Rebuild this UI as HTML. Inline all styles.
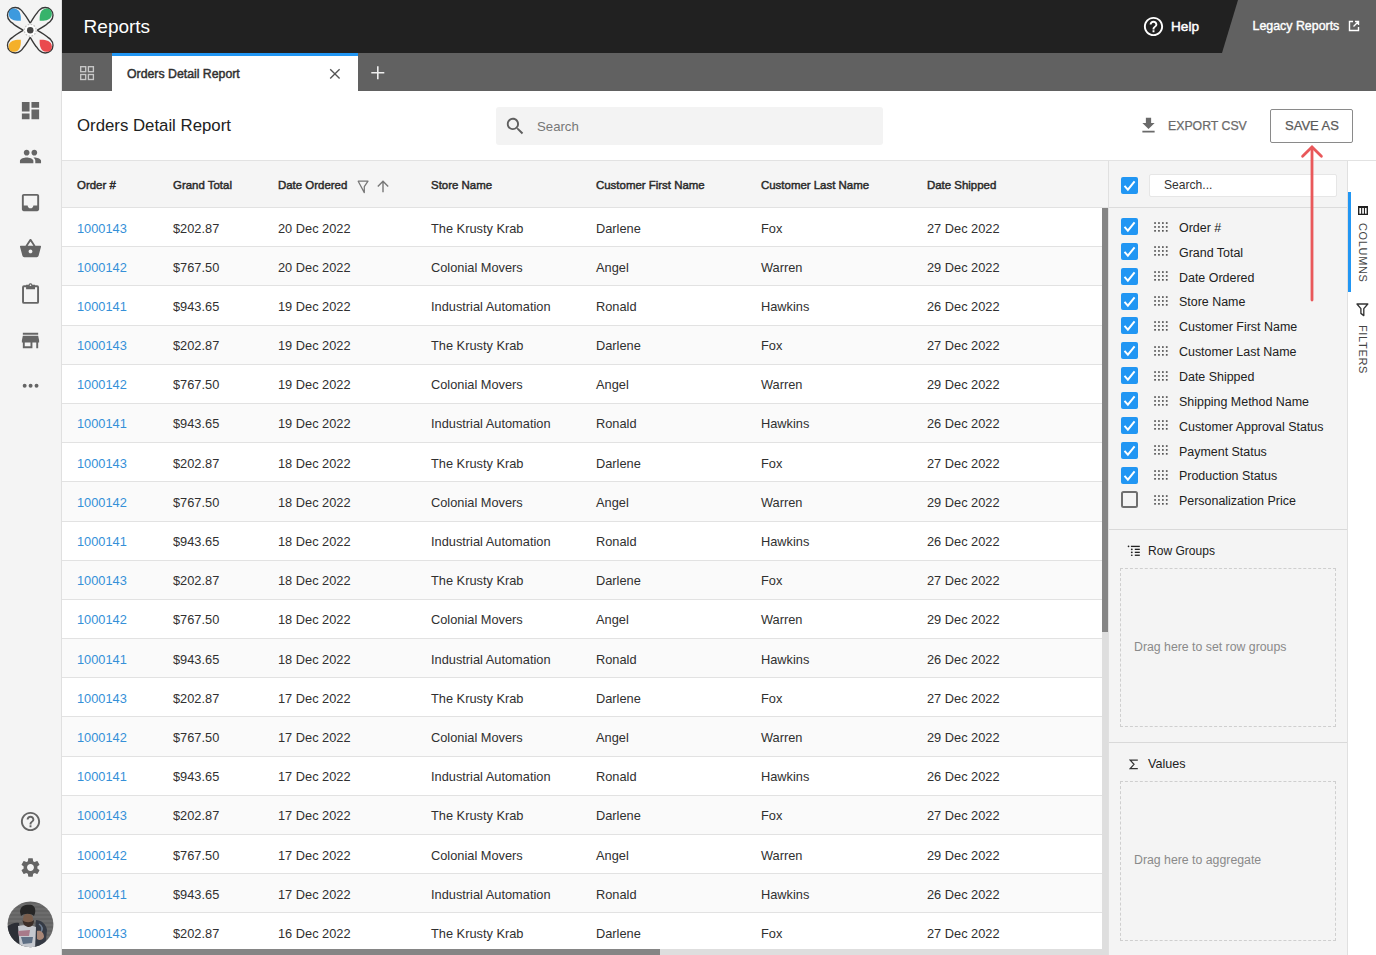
<!DOCTYPE html>
<html><head><meta charset="utf-8"><style>
*{box-sizing:border-box;margin:0;padding:0}
html,body{width:1376px;height:955px;overflow:hidden;background:#fff;font-family:"Liberation Sans",sans-serif;color:#212121}
.abs{position:absolute}
#side{position:absolute;left:0;top:0;width:62px;height:955px;background:#f4f4f4;border-right:1px solid #e0e0e0}
#side svg{position:absolute}
#hdr{position:absolute;left:62px;top:0;width:1314px;height:53px;background:#212121}
#hdr .title{position:absolute;left:21.6px;top:15px;font-size:19px;color:#fff;line-height:24px}
#legacy{position:absolute;left:1222px;top:0;width:154px;height:53px;background:#616161;clip-path:polygon(16px 0,154px 0,154px 53px,0 53px)}
#tabs{position:absolute;left:62px;top:53px;width:1314px;height:38px;background:#616161}
#tab{position:absolute;left:112px;top:53px;width:246px;height:38px;background:#fff;border-top:3px solid #2196f3}
#toolbar{position:absolute;left:62px;top:91px;width:1314px;height:70px;background:#fff;border-bottom:1px solid #e2e2e2}
#gridhdr{position:absolute;left:62px;top:161px;width:1046px;height:47px;background:#f5f5f5;border-bottom:1px solid #e2e2e2}
#gridhdr span{position:absolute;top:0.6px;line-height:47px;font-size:11.45px;font-weight:normal;-webkit-text-stroke:0.45px #2a2a2a;color:#2a2a2a;white-space:nowrap}
#body{position:absolute;left:62px;top:208px;width:1040px;height:741px;overflow:hidden}
.row{position:absolute;left:0;width:1040px;height:39.19px;background:#fff;border-bottom:1px solid #e2e2e2}
.row.odd{background:#fafafa}
.row span{position:absolute;top:1.5px;line-height:38.19px;font-size:12.8px;color:#303030;white-space:nowrap}
.row .c0{color:#3590d8}
#vscroll{position:absolute;left:1102px;top:208px;width:6px;height:741px;background:#dedede}
#vthumb{position:absolute;left:0;top:0;width:6px;height:424px;background:#858585}
#hscroll{position:absolute;left:62px;top:949px;width:1046px;height:6px;background:#dedede}
#hthumb{position:absolute;left:0;top:0;width:598px;height:6px;background:#858585}
#panel{position:absolute;left:1108px;top:161px;width:240px;height:794px;background:#f4f4f4;border-left:1px solid #e0e0e0;border-right:1px solid #e0e0e0}
.item{position:absolute;left:0;height:18px;width:238px}
.item .cb{position:absolute;left:12px;top:0.5px;width:17px;height:17px}
.item .cb svg,.item .dg svg{display:block}
.item .dg{position:absolute;left:45px;top:4px}
.item .nm{position:absolute;left:70px;top:1.3px;line-height:18px;font-size:12.45px;color:#212121;white-space:nowrap}
#sidetabs{position:absolute;left:1348px;top:161px;width:28px;height:794px;background:#fff}
.dz{position:absolute;left:10.8px;width:216px;border:1px dashed #cfcfcf}
.dzt{position:absolute;left:25px;font-size:12.3px;color:#8a8a8a;white-space:nowrap}

</style></head><body>
<div id="side">
  <!-- logo -->
  <svg style="left:4.2px;top:4.2px" width="54.6" height="54.6" viewBox="0 0 52 52">
    <g fill="none" stroke="#383838" stroke-width="1.3">
      <path d="M18.3 25C14 22.5 10.5 20.5 8.5 18.5C7 17.5 6 16.8 5.5 16A7.4 7.4 0 0 1 16 5.5C16.8 6 17.5 7 18.5 8.5C20.5 10.5 22.5 14 25 18.3"/>
      <path d="M18.3 25C14 22.5 10.5 20.5 8.5 18.5C7 17.5 6 16.8 5.5 16A7.4 7.4 0 0 1 16 5.5C16.8 6 17.5 7 18.5 8.5C20.5 10.5 22.5 14 25 18.3" transform="translate(50 0) scale(-1 1)"/>
      <path d="M18.3 25C14 22.5 10.5 20.5 8.5 18.5C7 17.5 6 16.8 5.5 16A7.4 7.4 0 0 1 16 5.5C16.8 6 17.5 7 18.5 8.5C20.5 10.5 22.5 14 25 18.3" transform="translate(0 50) scale(1 -1)"/>
      <path d="M18.3 25C14 22.5 10.5 20.5 8.5 18.5C7 17.5 6 16.8 5.5 16A7.4 7.4 0 0 1 16 5.5C16.8 6 17.5 7 18.5 8.5C20.5 10.5 22.5 14 25 18.3" transform="translate(50 50) scale(-1 -1)"/>
    </g>
    <path d="M16 16C12 16.3 4.6 15.8 4.4 9.6C4.4 6.3 6.3 4.4 9.6 4.4C15.8 4.6 16.3 12 16 16Z" fill="#3d9ade"/>
    <path d="M16 16C12 16.3 4.6 15.8 4.4 9.6C4.4 6.3 6.3 4.4 9.6 4.4C15.8 4.6 16.3 12 16 16Z" fill="#37b36b" transform="translate(50 0) scale(-1 1)"/>
    <path d="M16 16C12 16.3 4.6 15.8 4.4 9.6C4.4 6.3 6.3 4.4 9.6 4.4C15.8 4.6 16.3 12 16 16Z" fill="#f4b02a" transform="translate(0 50) scale(1 -1)"/>
    <path d="M16 16C12 16.3 4.6 15.8 4.4 9.6C4.4 6.3 6.3 4.4 9.6 4.4C15.8 4.6 16.3 12 16 16Z" fill="#ea4a4e" transform="translate(50 50) scale(-1 -1)"/>
    <circle cx="25" cy="25" r="5.6" fill="#fff" stroke="#c4c4c4" stroke-width="1.2" stroke-dasharray="1.6 1.3"/>
    <circle cx="25" cy="25" r="3.1" fill="#454545"/>
  </svg>
  <!-- dashboard -->
  <svg style="left:19px;top:99px" width="23" height="23" viewBox="0 0 24 24"><path fill="#656565" d="M3 13h8V3H3v10zm0 8h8v-6H3v6zm10 0h8V11h-8v10zm0-18v6h8V3h-8z"/></svg>
  <!-- people -->
  <svg style="left:19px;top:144.9px" width="23" height="23" viewBox="0 0 24 24"><path fill="#656565" d="M16 11c1.66 0 2.99-1.34 2.99-3S17.66 5 16 5c-1.66 0-3 1.34-3 3s1.34 3 3 3zm-8 0c1.66 0 2.99-1.34 2.99-3S9.66 5 8 5C6.34 5 5 6.34 5 8s1.34 3 3 3zm0 2c-2.33 0-7 1.17-7 3.5V19h14v-2.5c0-2.330-4.67-3.5-7-3.5zm8 0c-.29 0-.62.02-.97.05 1.16.84 1.97 1.97 1.970 3.45V19h6v-2.5c0-2.33-4.67-3.5-7-3.5z"/></svg>
  <!-- inbox -->
  <svg style="left:19px;top:191px" width="23" height="23" viewBox="0 0 24 24"><path fill="#656565" d="M19 3H4.99C3.88 3 3.01 3.89 3.01 5L3 19c0 1.1.88 2 1.99 2H19c1.1 0 2-.9 2-2V5c0-1.11-.9-2-2-2zm0 12h-4c0 1.66-1.35 3-3 3s-3-1.34-3-3H4.99V5H19v10z"/></svg>
  <!-- basket -->
  <svg style="left:19px;top:236.9px" width="23" height="23" viewBox="0 0 24 24"><path fill="#656565" d="M17.21 9l-4.38-6.56c-.19-.28-.51-.42-.83-.42-.32 0-.64.14-.83.43L6.79 9H2c-.55 0-1 .45-1 1 0 .09.01.18.04.27l2.54 9.27c.23.84 1 1.46 1.92 1.46h13c.92 0 1.69-.62 1.93-1.46l2.54-9.27L23 10c0-.55-.45-1-1-1h-4.79zM9 9l3-4.4L15 9H9zm3 8c-1.1 0-2-.9-2-2s.9-2 2-2 2 .9 2 2-.9 2-2 2z"/></svg>
  <!-- clipboard -->
  <svg style="left:19px;top:281.5px" width="23" height="23" viewBox="0 0 24 24"><path fill="none" stroke="#656565" stroke-width="2" d="M8.5 4.5H5.2c-.55 0-1 .45-1 1V20.8c0 .55.45 1 1 1H18.9c.55 0 1-.45 1-1V5.5c0-.55-.45-1-1-1H15.5"/><path fill="#656565" d="M12 1.3c-1 0-1.8.7-2 1.6H7.4V7.6h9.3V2.9H14c-.2-.9-1-1.6-2-1.6zm0 1.2a.85.85 0 1 1 0 1.7.85.85 0 0 1 0-1.7z"/></svg>
  <!-- store -->
  <svg style="left:19px;top:328.5px" width="23" height="23" viewBox="0 0 24 24"><path fill="#656565" d="M20 4H4v2h16V4zm1 10v-2l-1-5H4l-1 5v2h1v6h10v-6h4v6h2v-6h1zm-9 4H6v-4h6v4z"/></svg>
  <!-- more -->
  <svg style="left:19px;top:374px" width="23" height="23" viewBox="0 0 24 24"><circle cx="5.9" cy="12.3" r="2.05" fill="#656565"/><circle cx="12.1" cy="12.3" r="2.05" fill="#656565"/><circle cx="18.3" cy="12.3" r="2.05" fill="#656565"/></svg>
  <!-- help -->
  <svg style="left:19px;top:809.5px" width="23" height="23" viewBox="0 0 24 24"><path fill="#656565" d="M11 18h2v-2h-2v2zm1-16C6.48 2 2 6.48 2 12s4.48 10 10 10 10-4.48 10-10S17.52 2 12 2zm0 18c-4.41 0-8-3.590-8-8s3.59-8 8-8 8 3.59 8 8-3.59 8-8 8zm0-14c-2.21 0-4 1.79-4 4h2c0-1.1.9-2 2-2s2 .9 2 2c0 2-3 1.75-3 5h2c0-2.25 3-2.5 3-5 0-2.21-1.79-4-4-4z"/></svg>
  <!-- settings -->
  <svg style="left:19px;top:855.5px" width="23" height="23" viewBox="0 0 24 24"><path fill="#656565" d="M19.14 12.94c.04-.3.06-.61.06-.94 0-.32-.02-.64-.07-.94l2.03-1.58c.18-.14.23-.41.12-.61l-1.92-3.32c-.12-.22-.37-.29-.59-.22l-2.39.96c-.5-.38-1.03-.7-1.62-.94l-.36-2.54c-.04-.24-.24-.41-.48-.41h-3.84c-.24 0-.43.17-.47.41l-.36 2.54c-.59.24-1.13.57-1.62.94l-2.39-.96c-.22-.08-.47 0-.59.22L2.74 8.87c-.12.21-.08.47.12.61l2.03 1.58c-.05.3-.09.63-.09.94s.02.64.07.94l-2.03 1.58c-.18.14-.23.41-.12.61l1.92 3.32c.12.22.37.29.59.22l2.39-.96c.5.38 1.03.7 1.62.94l.36 2.54c.05.24.24.41.48.41h3.84c.24 0 .44-.17.47-.41l.36-2.54c.59-.24 1.13-.56 1.62-.94l2.390.96c.22.08.47 0 .59-.22l1.92-3.32c.12-.22.07-.47-.12-.61l-2.01-1.58zM12 15.6c-1.98 0-3.6-1.62-3.6-3.6s1.62-3.6 3.6-3.6 3.6 1.62 3.6 3.6-1.62 3.6-3.6 3.6z"/></svg>
  <!-- avatar -->
  <svg style="left:5px;top:898px" width="52" height="52" viewBox="0 0 52 52">
    <defs><clipPath id="av"><circle cx="25.5" cy="26.4" r="22.9"/></clipPath></defs>
    <g clip-path="url(#av)">
      <rect width="52" height="52" fill="#6c6c6c"/>
      <path d="M0 5H52" stroke="#555" stroke-width="0.6"/><path d="M0 9H52" stroke="#555" stroke-width="0.6"/><path d="M0 13H52" stroke="#555" stroke-width="0.6"/><path d="M0 17H52" stroke="#555" stroke-width="0.6"/><path d="M0 21H52" stroke="#555" stroke-width="0.6"/><path d="M0 25H52" stroke="#555" stroke-width="0.6"/><path d="M0 29H52" stroke="#555" stroke-width="0.6"/><path d="M0 33H52" stroke="#555" stroke-width="0.6"/><path d="M0 37H52" stroke="#555" stroke-width="0.6"/><path d="M0 41H52" stroke="#555" stroke-width="0.6"/><path d="M0 45H52" stroke="#555" stroke-width="0.6"/><path d="M0 49H52" stroke="#555" stroke-width="0.6"/>
      <path d="M0 30 C 5 26, 10 24, 14 25 L 18 52 L0 52Z" fill="#2c2f36"/>
      <path d="M31 22 C 36 22, 41 26, 42 32 L 40 52 L 28 52Z" fill="#353a44"/>
      <path d="M34 26 C 37 28, 38 31, 36 34" stroke="#6d7c90" stroke-width="1.5" fill="none"/>
      <path d="M13 28 C 17 27, 27 27, 31 29 L 30 52 L 15 52Z" fill="#c5c8ce"/>
      <path d="M13 33 L 25 32 L 24 38 L 14 38Z" fill="#a87a8a"/>
      <path d="M16 39 L 28 39 L 27 45 L 18 46Z" fill="#5e6f84"/>
      <path d="M32 33 C 36 32, 39 35, 39 39 C 38 42, 34 43, 32 41Z" fill="#a88676"/>
      <ellipse cx="23" cy="21" rx="5" ry="5.5" fill="#7a5e4c"/>
      <path d="M17.5 22 C 18 27, 21 29, 24 29 C 27 29, 29 26, 29 22 C 26 25, 20 25, 17.5 22Z" fill="#3b2e28"/>
      <path d="M15 14 C 15 7, 22 6, 27 7 C 31 9, 31 14, 29 18 C 26 15, 19 15, 16 18Z" fill="#262626"/>
    </g>
  </svg>
</div>

<div id="hdr"><div class="title">Reports</div></div>
<div id="legacy"></div>
<div class="abs" style="left:62px;top:52.6px;width:1314px;height:1.2px;background:rgba(0,0,0,0.13)"></div>
<svg class="abs" style="left:1142px;top:15px" width="23" height="23" viewBox="0 0 24 24"><path fill="#fff" d="M11 18h2v-2h-2v2zm1-16C6.48 2 2 6.48 2 12s4.48 10 10 10 10-4.48 10-10S17.52 2 12 2zm0 18c-4.41 0-8-3.59-8-8s3.59-8 8-8 8 3.59 8 8-3.59 8-8 8zm0-14c-2.21 0-4 1.79-4 4h2c0-1.1.9-2 2-2s2 .9 2 2c0 2-3 1.75-3 5h2c0-2.25 3-2.5 3-5 0-2.21-1.79-4-4-4z"/></svg>
<div class="abs" style="left:1171px;top:17.5px;font-size:13.6px;font-weight:normal;-webkit-text-stroke:0.45px #fff;color:#fff;line-height:17px">Help</div>
<div class="abs" style="left:1252.5px;top:17.5px;font-size:12.4px;font-weight:normal;-webkit-text-stroke:0.4px #fff;color:#fff;line-height:17px;white-space:nowrap">Legacy Reports</div>
<svg class="abs" style="left:1348px;top:20.4px" width="12" height="12" viewBox="0 0 12 12"><path d="M5 1.5H1.5V10.5H10.5V7M7 1.5H10.5V5M10.5 1.5L5.5 6.5" fill="none" stroke="#fff" stroke-width="1.4"/></svg>
<div id="tabs"></div>
<svg class="abs" style="left:78px;top:64.4px" width="19" height="19" viewBox="0 0 19 19"><g fill="none" stroke="#c8c8c8" stroke-width="1.35"><rect x="2.7" y="2.7" width="5" height="5"/><rect x="10.4" y="2.7" width="5" height="5"/><rect x="2.7" y="10.5" width="5" height="5"/><rect x="10.4" y="10.5" width="5" height="5"/></g></svg>
<div id="tab"></div>
<div class="abs" style="left:127px;top:66px;font-size:12.3px;font-weight:normal;-webkit-text-stroke:0.45px #303030;color:#303030;line-height:16px;white-space:nowrap">Orders Detail Report</div>
<svg class="abs" style="left:328.8px;top:68.3px" width="12" height="12" viewBox="0 0 12 12"><path d="M1.2 1.2L10.6 10.6M10.6 1.2L1.2 10.6" stroke="#555" stroke-width="1.35"/></svg>
<svg class="abs" style="left:369.5px;top:65px" width="16" height="16" viewBox="0 0 16 16"><path d="M7.8 1.2V14.2M1.3 7.7H14.3" stroke="#eee" stroke-width="1.6"/></svg>
<div id="toolbar"></div>
<div class="abs" style="left:77px;top:115px;font-size:16.8px;color:#212121;line-height:22px;white-space:nowrap">Orders Detail Report</div>
<div class="abs" style="left:496px;top:107px;width:387px;height:38px;background:#f3f3f3;border-radius:3px"></div>
<svg class="abs" style="left:503.5px;top:114.5px" width="22.5" height="22.5" viewBox="0 0 24 24"><path fill="#5f5f5f" d="M15.5 14h-.79l-.28-.27C15.41 12.59 16 11.11 16 9.5 16 5.91 13.09 3 9.5 3S3 5.91 3 9.5 5.91 16 9.5 16c1.61 0 3.09-.59 4.23-1.57l.27.28v.79l5 4.99L20.49 19l-4.99-5zm-6 0C7.01 14 5 11.99 5 9.5S7.01 5 9.5 5 14 7.01 14 9.5 11.99 14 9.5 14z"/></svg>
<div class="abs" style="left:537px;top:117.5px;font-size:13.2px;color:#777;line-height:18px">Search</div>
<svg class="abs" style="left:1137.5px;top:115.4px" width="21" height="21" viewBox="0 0 24 24"><path fill="#6a6a6a" d="M19 9h-4V3H9v6H5l7 7 7-7zM5 18v2h14v-2H5z"/></svg>
<div class="abs" style="left:1168px;top:116.8px;font-size:12.3px;color:#6a6a6a;-webkit-text-stroke:0.25px #6a6a6a;line-height:18px;white-space:nowrap">EXPORT CSV</div>
<div class="abs" style="left:1270px;top:109px;width:83px;height:34px;border:1px solid #8a8a8a;border-radius:2px"></div>
<div class="abs" style="left:1285px;top:116.5px;font-size:13.0px;color:#5a5a5a;-webkit-text-stroke:0.25px #5a5a5a;line-height:18px;white-space:nowrap">SAVE AS</div>
<div id="gridhdr">
  <span style="left:15px">Order #</span>
  <span style="left:111px">Grand Total</span>
  <span style="left:216px">Date Ordered</span>
  <svg style="position:absolute;left:294.5px;top:18.5px" width="13" height="14" viewBox="0 0 13 14"><path d="M1.2 1.2H11L7.3 6.6V12.6Z" fill="none" stroke="#777" stroke-width="1.25" stroke-linejoin="round"/></svg>
  <svg style="position:absolute;left:314px;top:18.5px" width="14" height="13" viewBox="0 0 14 13"><path d="M7 12.2V1.5M1.8 6.5L7 1.3L12.2 6.5" fill="none" stroke="#777" stroke-width="1.4"/></svg>
  <span style="left:369px">Store Name</span>
  <span style="left:534px">Customer First Name</span>
  <span style="left:699px">Customer Last Name</span>
  <span style="left:865px">Date Shipped</span>
</div>
<div id="body">
<div class="row" style="top:0.00px"><span class="c0" style="left:15px">1000143</span><span class="c1" style="left:111px">$202.87</span><span class="c2" style="left:216px">20 Dec 2022</span><span class="c3" style="left:369px">The Krusty Krab</span><span class="c4" style="left:534px">Darlene</span><span class="c5" style="left:699px">Fox</span><span class="c6" style="left:865px">27 Dec 2022</span></div>
<div class="row odd" style="top:39.19px"><span class="c0" style="left:15px">1000142</span><span class="c1" style="left:111px">$767.50</span><span class="c2" style="left:216px">20 Dec 2022</span><span class="c3" style="left:369px">Colonial Movers</span><span class="c4" style="left:534px">Angel</span><span class="c5" style="left:699px">Warren</span><span class="c6" style="left:865px">29 Dec 2022</span></div>
<div class="row" style="top:78.38px"><span class="c0" style="left:15px">1000141</span><span class="c1" style="left:111px">$943.65</span><span class="c2" style="left:216px">19 Dec 2022</span><span class="c3" style="left:369px">Industrial Automation</span><span class="c4" style="left:534px">Ronald</span><span class="c5" style="left:699px">Hawkins</span><span class="c6" style="left:865px">26 Dec 2022</span></div>
<div class="row odd" style="top:117.57px"><span class="c0" style="left:15px">1000143</span><span class="c1" style="left:111px">$202.87</span><span class="c2" style="left:216px">19 Dec 2022</span><span class="c3" style="left:369px">The Krusty Krab</span><span class="c4" style="left:534px">Darlene</span><span class="c5" style="left:699px">Fox</span><span class="c6" style="left:865px">27 Dec 2022</span></div>
<div class="row" style="top:156.76px"><span class="c0" style="left:15px">1000142</span><span class="c1" style="left:111px">$767.50</span><span class="c2" style="left:216px">19 Dec 2022</span><span class="c3" style="left:369px">Colonial Movers</span><span class="c4" style="left:534px">Angel</span><span class="c5" style="left:699px">Warren</span><span class="c6" style="left:865px">29 Dec 2022</span></div>
<div class="row odd" style="top:195.95px"><span class="c0" style="left:15px">1000141</span><span class="c1" style="left:111px">$943.65</span><span class="c2" style="left:216px">19 Dec 2022</span><span class="c3" style="left:369px">Industrial Automation</span><span class="c4" style="left:534px">Ronald</span><span class="c5" style="left:699px">Hawkins</span><span class="c6" style="left:865px">26 Dec 2022</span></div>
<div class="row" style="top:235.14px"><span class="c0" style="left:15px">1000143</span><span class="c1" style="left:111px">$202.87</span><span class="c2" style="left:216px">18 Dec 2022</span><span class="c3" style="left:369px">The Krusty Krab</span><span class="c4" style="left:534px">Darlene</span><span class="c5" style="left:699px">Fox</span><span class="c6" style="left:865px">27 Dec 2022</span></div>
<div class="row odd" style="top:274.33px"><span class="c0" style="left:15px">1000142</span><span class="c1" style="left:111px">$767.50</span><span class="c2" style="left:216px">18 Dec 2022</span><span class="c3" style="left:369px">Colonial Movers</span><span class="c4" style="left:534px">Angel</span><span class="c5" style="left:699px">Warren</span><span class="c6" style="left:865px">29 Dec 2022</span></div>
<div class="row" style="top:313.52px"><span class="c0" style="left:15px">1000141</span><span class="c1" style="left:111px">$943.65</span><span class="c2" style="left:216px">18 Dec 2022</span><span class="c3" style="left:369px">Industrial Automation</span><span class="c4" style="left:534px">Ronald</span><span class="c5" style="left:699px">Hawkins</span><span class="c6" style="left:865px">26 Dec 2022</span></div>
<div class="row odd" style="top:352.71px"><span class="c0" style="left:15px">1000143</span><span class="c1" style="left:111px">$202.87</span><span class="c2" style="left:216px">18 Dec 2022</span><span class="c3" style="left:369px">The Krusty Krab</span><span class="c4" style="left:534px">Darlene</span><span class="c5" style="left:699px">Fox</span><span class="c6" style="left:865px">27 Dec 2022</span></div>
<div class="row" style="top:391.90px"><span class="c0" style="left:15px">1000142</span><span class="c1" style="left:111px">$767.50</span><span class="c2" style="left:216px">18 Dec 2022</span><span class="c3" style="left:369px">Colonial Movers</span><span class="c4" style="left:534px">Angel</span><span class="c5" style="left:699px">Warren</span><span class="c6" style="left:865px">29 Dec 2022</span></div>
<div class="row odd" style="top:431.09px"><span class="c0" style="left:15px">1000141</span><span class="c1" style="left:111px">$943.65</span><span class="c2" style="left:216px">18 Dec 2022</span><span class="c3" style="left:369px">Industrial Automation</span><span class="c4" style="left:534px">Ronald</span><span class="c5" style="left:699px">Hawkins</span><span class="c6" style="left:865px">26 Dec 2022</span></div>
<div class="row" style="top:470.28px"><span class="c0" style="left:15px">1000143</span><span class="c1" style="left:111px">$202.87</span><span class="c2" style="left:216px">17 Dec 2022</span><span class="c3" style="left:369px">The Krusty Krab</span><span class="c4" style="left:534px">Darlene</span><span class="c5" style="left:699px">Fox</span><span class="c6" style="left:865px">27 Dec 2022</span></div>
<div class="row odd" style="top:509.47px"><span class="c0" style="left:15px">1000142</span><span class="c1" style="left:111px">$767.50</span><span class="c2" style="left:216px">17 Dec 2022</span><span class="c3" style="left:369px">Colonial Movers</span><span class="c4" style="left:534px">Angel</span><span class="c5" style="left:699px">Warren</span><span class="c6" style="left:865px">29 Dec 2022</span></div>
<div class="row" style="top:548.66px"><span class="c0" style="left:15px">1000141</span><span class="c1" style="left:111px">$943.65</span><span class="c2" style="left:216px">17 Dec 2022</span><span class="c3" style="left:369px">Industrial Automation</span><span class="c4" style="left:534px">Ronald</span><span class="c5" style="left:699px">Hawkins</span><span class="c6" style="left:865px">26 Dec 2022</span></div>
<div class="row odd" style="top:587.85px"><span class="c0" style="left:15px">1000143</span><span class="c1" style="left:111px">$202.87</span><span class="c2" style="left:216px">17 Dec 2022</span><span class="c3" style="left:369px">The Krusty Krab</span><span class="c4" style="left:534px">Darlene</span><span class="c5" style="left:699px">Fox</span><span class="c6" style="left:865px">27 Dec 2022</span></div>
<div class="row" style="top:627.04px"><span class="c0" style="left:15px">1000142</span><span class="c1" style="left:111px">$767.50</span><span class="c2" style="left:216px">17 Dec 2022</span><span class="c3" style="left:369px">Colonial Movers</span><span class="c4" style="left:534px">Angel</span><span class="c5" style="left:699px">Warren</span><span class="c6" style="left:865px">29 Dec 2022</span></div>
<div class="row odd" style="top:666.23px"><span class="c0" style="left:15px">1000141</span><span class="c1" style="left:111px">$943.65</span><span class="c2" style="left:216px">17 Dec 2022</span><span class="c3" style="left:369px">Industrial Automation</span><span class="c4" style="left:534px">Ronald</span><span class="c5" style="left:699px">Hawkins</span><span class="c6" style="left:865px">26 Dec 2022</span></div>
<div class="row" style="top:705.42px"><span class="c0" style="left:15px">1000143</span><span class="c1" style="left:111px">$202.87</span><span class="c2" style="left:216px">16 Dec 2022</span><span class="c3" style="left:369px">The Krusty Krab</span><span class="c4" style="left:534px">Darlene</span><span class="c5" style="left:699px">Fox</span><span class="c6" style="left:865px">27 Dec 2022</span></div>
</div>
<div id="vscroll"><div id="vthumb"></div></div>
<div id="hscroll"><div id="hthumb"></div></div>
<div id="panel">
<div class="abs" style="left:0;top:0;width:238px;height:47px;border-bottom:1px solid #dcdcdc"></div>
<div class="abs" style="left:12px;top:15.5px"><svg width="17" height="17" viewBox="0 0 17 17"><rect x="0" y="0" width="17" height="17" rx="2" fill="#2196f3"/><path d="M3.5 8.9L6.9 12.6L13.6 4.4" stroke="#fff" stroke-width="2" fill="none"/></svg></div>
<div class="abs" style="left:39.5px;top:13.2px;width:188px;height:22.4px;background:#fff;border:1px solid #e6e6e6;border-radius:2px"></div>
<div class="abs" style="left:55px;top:16px;font-size:12.1px;color:#333;line-height:17px">Search...</div>
<div class="item" style="top:56.50px"><span class="cb"><svg width="17" height="17" viewBox="0 0 17 17"><rect x="0" y="0" width="17" height="17" rx="2" fill="#2196f3"/><path d="M3.5 8.9L6.9 12.6L13.6 4.4" stroke="#fff" stroke-width="2" fill="none"/></svg></span><span class="dg"><svg width="14" height="10" viewBox="0 0 14 10"><rect x="0.2" y="0.2" width="1.7" height="1.7" fill="#555"/><rect x="0.2" y="4.1" width="1.7" height="1.7" fill="#555"/><rect x="0.2" y="8.0" width="1.7" height="1.7" fill="#555"/><rect x="4.1" y="0.2" width="1.7" height="1.7" fill="#555"/><rect x="4.1" y="4.1" width="1.7" height="1.7" fill="#555"/><rect x="4.1" y="8.0" width="1.7" height="1.7" fill="#555"/><rect x="8.0" y="0.2" width="1.7" height="1.7" fill="#555"/><rect x="8.0" y="4.1" width="1.7" height="1.7" fill="#555"/><rect x="8.0" y="8.0" width="1.7" height="1.7" fill="#555"/><rect x="11.9" y="0.2" width="1.7" height="1.7" fill="#555"/><rect x="11.9" y="4.1" width="1.7" height="1.7" fill="#555"/><rect x="11.9" y="8.0" width="1.7" height="1.7" fill="#555"/></svg></span><span class="nm">Order #</span></div>
<div class="item" style="top:81.36px"><span class="cb"><svg width="17" height="17" viewBox="0 0 17 17"><rect x="0" y="0" width="17" height="17" rx="2" fill="#2196f3"/><path d="M3.5 8.9L6.9 12.6L13.6 4.4" stroke="#fff" stroke-width="2" fill="none"/></svg></span><span class="dg"><svg width="14" height="10" viewBox="0 0 14 10"><rect x="0.2" y="0.2" width="1.7" height="1.7" fill="#555"/><rect x="0.2" y="4.1" width="1.7" height="1.7" fill="#555"/><rect x="0.2" y="8.0" width="1.7" height="1.7" fill="#555"/><rect x="4.1" y="0.2" width="1.7" height="1.7" fill="#555"/><rect x="4.1" y="4.1" width="1.7" height="1.7" fill="#555"/><rect x="4.1" y="8.0" width="1.7" height="1.7" fill="#555"/><rect x="8.0" y="0.2" width="1.7" height="1.7" fill="#555"/><rect x="8.0" y="4.1" width="1.7" height="1.7" fill="#555"/><rect x="8.0" y="8.0" width="1.7" height="1.7" fill="#555"/><rect x="11.9" y="0.2" width="1.7" height="1.7" fill="#555"/><rect x="11.9" y="4.1" width="1.7" height="1.7" fill="#555"/><rect x="11.9" y="8.0" width="1.7" height="1.7" fill="#555"/></svg></span><span class="nm">Grand Total</span></div>
<div class="item" style="top:106.22px"><span class="cb"><svg width="17" height="17" viewBox="0 0 17 17"><rect x="0" y="0" width="17" height="17" rx="2" fill="#2196f3"/><path d="M3.5 8.9L6.9 12.6L13.6 4.4" stroke="#fff" stroke-width="2" fill="none"/></svg></span><span class="dg"><svg width="14" height="10" viewBox="0 0 14 10"><rect x="0.2" y="0.2" width="1.7" height="1.7" fill="#555"/><rect x="0.2" y="4.1" width="1.7" height="1.7" fill="#555"/><rect x="0.2" y="8.0" width="1.7" height="1.7" fill="#555"/><rect x="4.1" y="0.2" width="1.7" height="1.7" fill="#555"/><rect x="4.1" y="4.1" width="1.7" height="1.7" fill="#555"/><rect x="4.1" y="8.0" width="1.7" height="1.7" fill="#555"/><rect x="8.0" y="0.2" width="1.7" height="1.7" fill="#555"/><rect x="8.0" y="4.1" width="1.7" height="1.7" fill="#555"/><rect x="8.0" y="8.0" width="1.7" height="1.7" fill="#555"/><rect x="11.9" y="0.2" width="1.7" height="1.7" fill="#555"/><rect x="11.9" y="4.1" width="1.7" height="1.7" fill="#555"/><rect x="11.9" y="8.0" width="1.7" height="1.7" fill="#555"/></svg></span><span class="nm">Date Ordered</span></div>
<div class="item" style="top:131.08px"><span class="cb"><svg width="17" height="17" viewBox="0 0 17 17"><rect x="0" y="0" width="17" height="17" rx="2" fill="#2196f3"/><path d="M3.5 8.9L6.9 12.6L13.6 4.4" stroke="#fff" stroke-width="2" fill="none"/></svg></span><span class="dg"><svg width="14" height="10" viewBox="0 0 14 10"><rect x="0.2" y="0.2" width="1.7" height="1.7" fill="#555"/><rect x="0.2" y="4.1" width="1.7" height="1.7" fill="#555"/><rect x="0.2" y="8.0" width="1.7" height="1.7" fill="#555"/><rect x="4.1" y="0.2" width="1.7" height="1.7" fill="#555"/><rect x="4.1" y="4.1" width="1.7" height="1.7" fill="#555"/><rect x="4.1" y="8.0" width="1.7" height="1.7" fill="#555"/><rect x="8.0" y="0.2" width="1.7" height="1.7" fill="#555"/><rect x="8.0" y="4.1" width="1.7" height="1.7" fill="#555"/><rect x="8.0" y="8.0" width="1.7" height="1.7" fill="#555"/><rect x="11.9" y="0.2" width="1.7" height="1.7" fill="#555"/><rect x="11.9" y="4.1" width="1.7" height="1.7" fill="#555"/><rect x="11.9" y="8.0" width="1.7" height="1.7" fill="#555"/></svg></span><span class="nm">Store Name</span></div>
<div class="item" style="top:155.94px"><span class="cb"><svg width="17" height="17" viewBox="0 0 17 17"><rect x="0" y="0" width="17" height="17" rx="2" fill="#2196f3"/><path d="M3.5 8.9L6.9 12.6L13.6 4.4" stroke="#fff" stroke-width="2" fill="none"/></svg></span><span class="dg"><svg width="14" height="10" viewBox="0 0 14 10"><rect x="0.2" y="0.2" width="1.7" height="1.7" fill="#555"/><rect x="0.2" y="4.1" width="1.7" height="1.7" fill="#555"/><rect x="0.2" y="8.0" width="1.7" height="1.7" fill="#555"/><rect x="4.1" y="0.2" width="1.7" height="1.7" fill="#555"/><rect x="4.1" y="4.1" width="1.7" height="1.7" fill="#555"/><rect x="4.1" y="8.0" width="1.7" height="1.7" fill="#555"/><rect x="8.0" y="0.2" width="1.7" height="1.7" fill="#555"/><rect x="8.0" y="4.1" width="1.7" height="1.7" fill="#555"/><rect x="8.0" y="8.0" width="1.7" height="1.7" fill="#555"/><rect x="11.9" y="0.2" width="1.7" height="1.7" fill="#555"/><rect x="11.9" y="4.1" width="1.7" height="1.7" fill="#555"/><rect x="11.9" y="8.0" width="1.7" height="1.7" fill="#555"/></svg></span><span class="nm">Customer First Name</span></div>
<div class="item" style="top:180.80px"><span class="cb"><svg width="17" height="17" viewBox="0 0 17 17"><rect x="0" y="0" width="17" height="17" rx="2" fill="#2196f3"/><path d="M3.5 8.9L6.9 12.6L13.6 4.4" stroke="#fff" stroke-width="2" fill="none"/></svg></span><span class="dg"><svg width="14" height="10" viewBox="0 0 14 10"><rect x="0.2" y="0.2" width="1.7" height="1.7" fill="#555"/><rect x="0.2" y="4.1" width="1.7" height="1.7" fill="#555"/><rect x="0.2" y="8.0" width="1.7" height="1.7" fill="#555"/><rect x="4.1" y="0.2" width="1.7" height="1.7" fill="#555"/><rect x="4.1" y="4.1" width="1.7" height="1.7" fill="#555"/><rect x="4.1" y="8.0" width="1.7" height="1.7" fill="#555"/><rect x="8.0" y="0.2" width="1.7" height="1.7" fill="#555"/><rect x="8.0" y="4.1" width="1.7" height="1.7" fill="#555"/><rect x="8.0" y="8.0" width="1.7" height="1.7" fill="#555"/><rect x="11.9" y="0.2" width="1.7" height="1.7" fill="#555"/><rect x="11.9" y="4.1" width="1.7" height="1.7" fill="#555"/><rect x="11.9" y="8.0" width="1.7" height="1.7" fill="#555"/></svg></span><span class="nm">Customer Last Name</span></div>
<div class="item" style="top:205.66px"><span class="cb"><svg width="17" height="17" viewBox="0 0 17 17"><rect x="0" y="0" width="17" height="17" rx="2" fill="#2196f3"/><path d="M3.5 8.9L6.9 12.6L13.6 4.4" stroke="#fff" stroke-width="2" fill="none"/></svg></span><span class="dg"><svg width="14" height="10" viewBox="0 0 14 10"><rect x="0.2" y="0.2" width="1.7" height="1.7" fill="#555"/><rect x="0.2" y="4.1" width="1.7" height="1.7" fill="#555"/><rect x="0.2" y="8.0" width="1.7" height="1.7" fill="#555"/><rect x="4.1" y="0.2" width="1.7" height="1.7" fill="#555"/><rect x="4.1" y="4.1" width="1.7" height="1.7" fill="#555"/><rect x="4.1" y="8.0" width="1.7" height="1.7" fill="#555"/><rect x="8.0" y="0.2" width="1.7" height="1.7" fill="#555"/><rect x="8.0" y="4.1" width="1.7" height="1.7" fill="#555"/><rect x="8.0" y="8.0" width="1.7" height="1.7" fill="#555"/><rect x="11.9" y="0.2" width="1.7" height="1.7" fill="#555"/><rect x="11.9" y="4.1" width="1.7" height="1.7" fill="#555"/><rect x="11.9" y="8.0" width="1.7" height="1.7" fill="#555"/></svg></span><span class="nm">Date Shipped</span></div>
<div class="item" style="top:230.52px"><span class="cb"><svg width="17" height="17" viewBox="0 0 17 17"><rect x="0" y="0" width="17" height="17" rx="2" fill="#2196f3"/><path d="M3.5 8.9L6.9 12.6L13.6 4.4" stroke="#fff" stroke-width="2" fill="none"/></svg></span><span class="dg"><svg width="14" height="10" viewBox="0 0 14 10"><rect x="0.2" y="0.2" width="1.7" height="1.7" fill="#555"/><rect x="0.2" y="4.1" width="1.7" height="1.7" fill="#555"/><rect x="0.2" y="8.0" width="1.7" height="1.7" fill="#555"/><rect x="4.1" y="0.2" width="1.7" height="1.7" fill="#555"/><rect x="4.1" y="4.1" width="1.7" height="1.7" fill="#555"/><rect x="4.1" y="8.0" width="1.7" height="1.7" fill="#555"/><rect x="8.0" y="0.2" width="1.7" height="1.7" fill="#555"/><rect x="8.0" y="4.1" width="1.7" height="1.7" fill="#555"/><rect x="8.0" y="8.0" width="1.7" height="1.7" fill="#555"/><rect x="11.9" y="0.2" width="1.7" height="1.7" fill="#555"/><rect x="11.9" y="4.1" width="1.7" height="1.7" fill="#555"/><rect x="11.9" y="8.0" width="1.7" height="1.7" fill="#555"/></svg></span><span class="nm">Shipping Method Name</span></div>
<div class="item" style="top:255.38px"><span class="cb"><svg width="17" height="17" viewBox="0 0 17 17"><rect x="0" y="0" width="17" height="17" rx="2" fill="#2196f3"/><path d="M3.5 8.9L6.9 12.6L13.6 4.4" stroke="#fff" stroke-width="2" fill="none"/></svg></span><span class="dg"><svg width="14" height="10" viewBox="0 0 14 10"><rect x="0.2" y="0.2" width="1.7" height="1.7" fill="#555"/><rect x="0.2" y="4.1" width="1.7" height="1.7" fill="#555"/><rect x="0.2" y="8.0" width="1.7" height="1.7" fill="#555"/><rect x="4.1" y="0.2" width="1.7" height="1.7" fill="#555"/><rect x="4.1" y="4.1" width="1.7" height="1.7" fill="#555"/><rect x="4.1" y="8.0" width="1.7" height="1.7" fill="#555"/><rect x="8.0" y="0.2" width="1.7" height="1.7" fill="#555"/><rect x="8.0" y="4.1" width="1.7" height="1.7" fill="#555"/><rect x="8.0" y="8.0" width="1.7" height="1.7" fill="#555"/><rect x="11.9" y="0.2" width="1.7" height="1.7" fill="#555"/><rect x="11.9" y="4.1" width="1.7" height="1.7" fill="#555"/><rect x="11.9" y="8.0" width="1.7" height="1.7" fill="#555"/></svg></span><span class="nm">Customer Approval Status</span></div>
<div class="item" style="top:280.24px"><span class="cb"><svg width="17" height="17" viewBox="0 0 17 17"><rect x="0" y="0" width="17" height="17" rx="2" fill="#2196f3"/><path d="M3.5 8.9L6.9 12.6L13.6 4.4" stroke="#fff" stroke-width="2" fill="none"/></svg></span><span class="dg"><svg width="14" height="10" viewBox="0 0 14 10"><rect x="0.2" y="0.2" width="1.7" height="1.7" fill="#555"/><rect x="0.2" y="4.1" width="1.7" height="1.7" fill="#555"/><rect x="0.2" y="8.0" width="1.7" height="1.7" fill="#555"/><rect x="4.1" y="0.2" width="1.7" height="1.7" fill="#555"/><rect x="4.1" y="4.1" width="1.7" height="1.7" fill="#555"/><rect x="4.1" y="8.0" width="1.7" height="1.7" fill="#555"/><rect x="8.0" y="0.2" width="1.7" height="1.7" fill="#555"/><rect x="8.0" y="4.1" width="1.7" height="1.7" fill="#555"/><rect x="8.0" y="8.0" width="1.7" height="1.7" fill="#555"/><rect x="11.9" y="0.2" width="1.7" height="1.7" fill="#555"/><rect x="11.9" y="4.1" width="1.7" height="1.7" fill="#555"/><rect x="11.9" y="8.0" width="1.7" height="1.7" fill="#555"/></svg></span><span class="nm">Payment Status</span></div>
<div class="item" style="top:305.10px"><span class="cb"><svg width="17" height="17" viewBox="0 0 17 17"><rect x="0" y="0" width="17" height="17" rx="2" fill="#2196f3"/><path d="M3.5 8.9L6.9 12.6L13.6 4.4" stroke="#fff" stroke-width="2" fill="none"/></svg></span><span class="dg"><svg width="14" height="10" viewBox="0 0 14 10"><rect x="0.2" y="0.2" width="1.7" height="1.7" fill="#555"/><rect x="0.2" y="4.1" width="1.7" height="1.7" fill="#555"/><rect x="0.2" y="8.0" width="1.7" height="1.7" fill="#555"/><rect x="4.1" y="0.2" width="1.7" height="1.7" fill="#555"/><rect x="4.1" y="4.1" width="1.7" height="1.7" fill="#555"/><rect x="4.1" y="8.0" width="1.7" height="1.7" fill="#555"/><rect x="8.0" y="0.2" width="1.7" height="1.7" fill="#555"/><rect x="8.0" y="4.1" width="1.7" height="1.7" fill="#555"/><rect x="8.0" y="8.0" width="1.7" height="1.7" fill="#555"/><rect x="11.9" y="0.2" width="1.7" height="1.7" fill="#555"/><rect x="11.9" y="4.1" width="1.7" height="1.7" fill="#555"/><rect x="11.9" y="8.0" width="1.7" height="1.7" fill="#555"/></svg></span><span class="nm">Production Status</span></div>
<div class="item" style="top:329.96px"><span class="cb"><svg width="17" height="17" viewBox="0 0 17 17"><rect x="1" y="1" width="15" height="15" rx="1.5" fill="none" stroke="#6f6f6f" stroke-width="2"/></svg></span><span class="dg"><svg width="14" height="10" viewBox="0 0 14 10"><rect x="0.2" y="0.2" width="1.7" height="1.7" fill="#555"/><rect x="0.2" y="4.1" width="1.7" height="1.7" fill="#555"/><rect x="0.2" y="8.0" width="1.7" height="1.7" fill="#555"/><rect x="4.1" y="0.2" width="1.7" height="1.7" fill="#555"/><rect x="4.1" y="4.1" width="1.7" height="1.7" fill="#555"/><rect x="4.1" y="8.0" width="1.7" height="1.7" fill="#555"/><rect x="8.0" y="0.2" width="1.7" height="1.7" fill="#555"/><rect x="8.0" y="4.1" width="1.7" height="1.7" fill="#555"/><rect x="8.0" y="8.0" width="1.7" height="1.7" fill="#555"/><rect x="11.9" y="0.2" width="1.7" height="1.7" fill="#555"/><rect x="11.9" y="4.1" width="1.7" height="1.7" fill="#555"/><rect x="11.9" y="8.0" width="1.7" height="1.7" fill="#555"/></svg></span><span class="nm">Personalization Price</span></div>
<div class="abs" style="left:0;top:368px;width:238px;height:1px;background:#d9d9d9"></div>
<svg class="abs" style="left:18px;top:383.6px" width="13" height="12" viewBox="0 0 13 12"><g fill="#222"><rect x="0.7" y="0.6" width="1.7" height="1.7" rx="0.8"/><rect x="3.9" y="0.75" width="8.9" height="1.3"/><rect x="3.9" y="3.6" width="1.8" height="1.6" rx="0.8"/><rect x="7.8" y="3.7" width="5" height="1.3"/><rect x="3.9" y="6.6" width="1.8" height="1.6" rx="0.8"/><rect x="7.8" y="6.7" width="5" height="1.3"/><rect x="3.9" y="9.5" width="1.8" height="1.6" rx="0.8"/><rect x="7.8" y="9.6" width="5" height="1.3"/></g></svg>
<div class="abs" style="left:39px;top:382px;font-size:12.05px;color:#212121;line-height:17px;white-space:nowrap">Row Groups</div>
<div class="dz" style="top:406.5px;height:159.5px"></div>
<div class="dzt" style="top:478px;line-height:17px">Drag here to set row groups</div>
<div class="abs" style="left:0;top:581px;width:238px;height:1px;background:#d9d9d9"></div>
<svg class="abs" style="left:19.8px;top:597.6px" width="10" height="11" viewBox="0 0 10 11"><path d="M8.8 1.2H1.2L5 5.3L1.2 9.5H8.8" fill="none" stroke="#333" stroke-width="1.25" stroke-linejoin="miter"/></svg>
<div class="abs" style="left:39px;top:595px;font-size:12.6px;color:#212121;line-height:17px">Values</div>
<div class="dz" style="top:619.8px;height:160px"></div>
<div class="dzt" style="top:691px;line-height:17px">Drag here to aggregate</div>
</div>
<div id="sidetabs"></div>
<div class="abs" style="left:1348px;top:192px;width:2.6px;height:99.5px;background:#2196f3"></div>
<svg class="abs" style="left:1358px;top:206px" width="10" height="9" viewBox="0 0 10 9"><g fill="#222"><rect x="0" y="0" width="10" height="2"/><rect x="0" y="0" width="1.4" height="9"/><rect x="8.6" y="0" width="1.4" height="9"/><rect x="0" y="7.7" width="10" height="1.3"/><rect x="3.1" y="0" width="1.1" height="9"/><rect x="5.9" y="0" width="1.1" height="9"/></g></svg>
<div class="abs" style="left:1363px;top:223px;transform-origin:0 0;transform:rotate(90deg);font-size:11px;color:#444;letter-spacing:0.65px;line-height:12px;white-space:nowrap;margin-left:6px">COLUMNS</div>
<svg class="abs" style="left:1356.2px;top:303.4px" width="13" height="14" viewBox="0 0 13 14"><path d="M1 1H11.8L7.8 5.6V12.6L4.9 10.4V5.6Z" fill="none" stroke="#333" stroke-width="1.35" stroke-linejoin="round"/></svg>
<div class="abs" style="left:1369px;top:324.5px;transform-origin:0 0;transform:rotate(90deg);font-size:11px;color:#444;letter-spacing:0.65px;line-height:12px;white-space:nowrap">FILTERS</div>
<svg class="abs" style="left:1300px;top:145px" width="24" height="158" viewBox="0 0 24 158"><g stroke="#e9585a" stroke-width="2.8" fill="none" stroke-linecap="round"><path d="M12 3V155"/><path d="M2.6 11.2L12 2L21.4 11.2"/></g></svg>

</body></html>
